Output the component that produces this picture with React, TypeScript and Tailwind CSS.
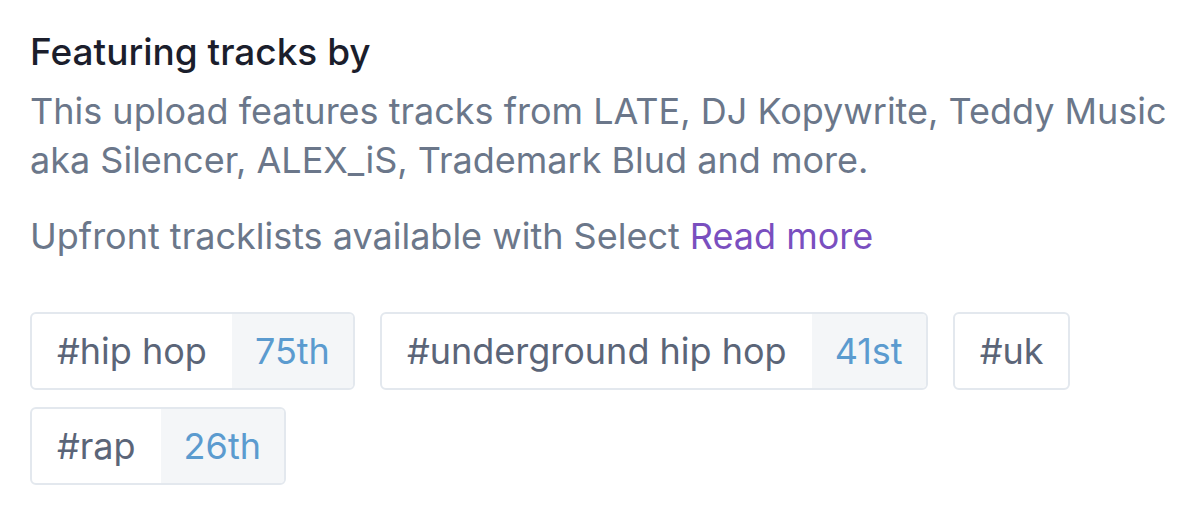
const tags = [
  { name: "#hip hop", rank: "75th" },
  { name: "#underground hip hop", rank: "41st" },
  { name: "#uk" },
  { name: "#rap", rank: "26th" },
];

export default function App() {
  return (
    <div
      className="w-[1200px] h-[517px] bg-white pl-[30px] pr-[20px] pt-[29px]"
      style={{ fontFamily: "Inter, 'Noto Sans', sans-serif" }}
    >
      <h2 className="text-[37px] leading-[45px] font-medium text-[#1b1e2c]">Featuring tracks by</h2>
      <p className="mt-[13px] text-[36px] leading-[49px] text-[#6b778a]">
        This upload features tracks from LATE, DJ Kopywrite, Teddy Music aka Silencer, ALEX_iS, Trademark Blud and more.
      </p>
      <p className="mt-[27px] text-[36px] leading-[49px] text-[#6b778a]">
        Upfront tracklists available with Select <span className="text-[#7a4fbf]">Read more</span>
      </p>
      <div className="mt-[51px] flex flex-wrap gap-x-[25px] gap-y-[17px]">
        {tags.map((t) => (
          <div
            key={t.name}
            className="flex h-[78px] items-stretch overflow-hidden rounded-[6px] border-2 border-[#e3e8ee] text-[36px]"
          >
            <span className="flex items-center px-[25px] text-[#5b6578]">{t.name}</span>
            {t.rank && (
              <span className="flex items-center bg-[#f4f6f8] px-[23px] text-[#5b9bcf]">{t.rank}</span>
            )}
          </div>
        ))}
      </div>
    </div>
  );
}
